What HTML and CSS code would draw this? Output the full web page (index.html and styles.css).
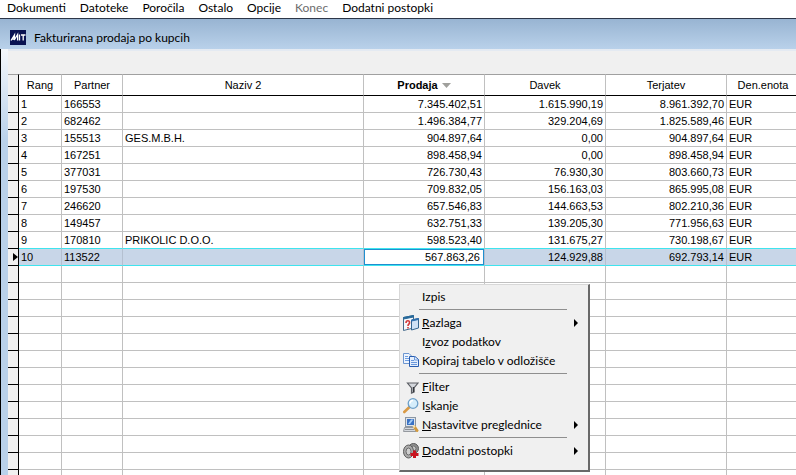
FILE: index.html
```html
<!DOCTYPE html>
<html lang="sl">
<head>
<meta charset="utf-8">
<title>Fakturirana prodaja po kupcih</title>
<link rel="stylesheet" href="styles.css">
</head>
<body>
<nav class="menubar">
  <button>Dokumenti</button>
  <button>Datoteke</button>
  <button>Poročila</button>
  <button>Ostalo</button>
  <button>Opcije</button>
  <button disabled>Konec</button>
  <button>Dodatni postopki</button>
</nav>
<header class="titlebar">
  <svg class="logo" viewBox="0 0 16 15" aria-hidden="true">
    <rect width="16" height="15" fill="#0a1352"/>
    <path d="M1 10.5L4.5 5L4.3 10L7.6 4.5V10.5M2 9H4M9.5 4.5V10.5M11 5H15.5M13.2 5V10.5" fill="none" stroke="#fff" stroke-width="1.3"/>
  </svg>
  <h1>Fakturirana prodaja po kupcih</h1>
</header>
<main class="window">
  <div class="toolbar"></div>
  <table class="grid">
    <colgroup><col class="c-mark"><col class="c-rank"><col class="c-partner"><col><col class="c-sum"><col class="c-sum"><col class="c-sum"><col class="c-unit"></colgroup>
    <thead>
      <tr><th></th><th>Rang</th><th>Partner</th><th>Naziv 2</th><th class="sorted">Prodaja <svg class="sort" viewBox="0 0 9 5" aria-hidden="true"><path d="M0 0H9L4.500 5Z" fill="#a0a09c"/></svg></th><th>Davek</th><th>Terjatev</th><th>Den.enota</th></tr>
    </thead>
    <tbody>
      <tr><td></td><td>1</td><td>166553</td><td></td><td class="num">7.345.402,51</td><td class="num">1.615.990,19</td><td class="num">8.961.392,70</td><td>EUR</td></tr>
      <tr><td></td><td>2</td><td>682462</td><td></td><td class="num">1.496.384,77</td><td class="num">329.204,69</td><td class="num">1.825.589,46</td><td>EUR</td></tr>
      <tr><td></td><td>3</td><td>155513</td><td>GES.M.B.H.</td><td class="num">904.897,64</td><td class="num">0,00</td><td class="num">904.897,64</td><td>EUR</td></tr>
      <tr><td></td><td>4</td><td>167251</td><td></td><td class="num">898.458,94</td><td class="num">0,00</td><td class="num">898.458,94</td><td>EUR</td></tr>
      <tr><td></td><td>5</td><td>377031</td><td></td><td class="num">726.730,43</td><td class="num">76.930,30</td><td class="num">803.660,73</td><td>EUR</td></tr>
      <tr><td></td><td>6</td><td>197530</td><td></td><td class="num">709.832,05</td><td class="num">156.163,03</td><td class="num">865.995,08</td><td>EUR</td></tr>
      <tr><td></td><td>7</td><td>246620</td><td></td><td class="num">657.546,83</td><td class="num">144.663,53</td><td class="num">802.210,36</td><td>EUR</td></tr>
      <tr><td></td><td>8</td><td>149457</td><td></td><td class="num">632.751,33</td><td class="num">139.205,30</td><td class="num">771.956,63</td><td>EUR</td></tr>
      <tr class="before-current"><td></td><td>9</td><td>170810</td><td>PRIKOLIC D.O.O.</td><td class="num">598.523,40</td><td class="num">131.675,27</td><td class="num">730.198,67</td><td>EUR</td></tr>
      <tr class="current"><td><svg class="marker" viewBox="0 0 5 8" aria-hidden="true"><path d="M0 0L5 4L0 8Z"/></svg></td><td>10</td><td>113522</td><td></td><td class="edit"><input type="text" value="567.863,26" aria-label="Prodaja"></td><td class="num">124.929,88</td><td class="num">692.793,14</td><td>EUR</td></tr>
      <tr><td></td><td></td><td></td><td></td><td></td><td></td><td></td><td></td></tr>
      <tr><td></td><td></td><td></td><td></td><td></td><td></td><td></td><td></td></tr>
      <tr><td></td><td></td><td></td><td></td><td></td><td></td><td></td><td></td></tr>
      <tr><td></td><td></td><td></td><td></td><td></td><td></td><td></td><td></td></tr>
      <tr><td></td><td></td><td></td><td></td><td></td><td></td><td></td><td></td></tr>
      <tr><td></td><td></td><td></td><td></td><td></td><td></td><td></td><td></td></tr>
      <tr><td></td><td></td><td></td><td></td><td></td><td></td><td></td><td></td></tr>
      <tr><td></td><td></td><td></td><td></td><td></td><td></td><td></td><td></td></tr>
      <tr><td></td><td></td><td></td><td></td><td></td><td></td><td></td><td></td></tr>
      <tr><td></td><td></td><td></td><td></td><td></td><td></td><td></td><td></td></tr>
      <tr><td></td><td></td><td></td><td></td><td></td><td></td><td></td><td></td></tr>
      <tr><td></td><td></td><td></td><td></td><td></td><td></td><td></td><td></td></tr>
      <tr><td></td><td></td><td></td><td></td><td></td><td></td><td></td><td></td></tr>
    </tbody>
  </table>
</main>
<div class="popup">
  <button><span class="icon"></span><span class="label">Izpis</span></button>
  <hr>
  <button>
    <svg class="icon" viewBox="0 0 16 16" aria-hidden="true">
      <path d="M.5 2.500L10.500 .500V13L.5 15.500Z" fill="#f6f8fb" stroke="#456b8c"/>
      <path d="M.5 2.500L10.500 .500V2L.5 4Z" fill="#27699a" stroke="#27699a"/>
      <path d="M3 8C3 5 7 5 6.500 8C6.300 9.300 5 9 5 11M5 12V13.500" fill="none" stroke="#d33b3b" stroke-width="1.600"/>
      <path d="M8.500 5L15.500 3.500V13L8.500 15Z" fill="#cfe1f5" stroke="#34658f"/>
      <path d="M8.500 5L15.500 3.500V4.500L8.500 6Z" fill="#2f6fae" stroke="#2f6fae"/>
    </svg>
    <span class="label"><u>R</u>azlaga</span><svg class="arrow" viewBox="0 0 4 8" aria-hidden="true"><path d="M0 0L4 4L0 8Z"/></svg>
  </button>
  <button><span class="icon"></span><span class="label">I<u>z</u>voz podatkov</span></button>
  <button>
    <svg class="icon" viewBox="0 0 16 16" aria-hidden="true">
      <path d="M.5 .500H6L8.500 3V10.500H.5Z" fill="#eef4fd" stroke="#6d96d0"/>
      <path d="M2 3.500H5M2 5.500H7M2 7.500H7" stroke="#6f9ee0"/>
      <path d="M6.500 3.500H12L15.500 6.500V13.500H6.500Z" fill="#e4eefc" stroke="#285db0"/>
      <path d="M11.500 3.500V7H15M8 7.500H11M8 9.500H14M8 11.500H14" fill="none" stroke="#6a98dc"/>
    </svg>
    <span class="label">Kopiraj tabelo v odložišče</span>
  </button>
  <hr>
  <button>
    <svg class="icon" viewBox="0 0 16 16" aria-hidden="true">
      <path d="M4.500 4H15L11 9V13L8.500 14V9Z" fill="#d4d7dc" stroke="#5c5f65" stroke-width="1.200"/>
      <path d="M10.500 8V13" stroke="#34373c" stroke-width="1.500"/>
    </svg>
    <span class="label"><u>F</u>ilter</span>
  </button>
  <button>
    <svg class="icon" viewBox="0 0 16 16" aria-hidden="true">
      <path d="M6.500 9L1.300 14" stroke="#d99a45" stroke-width="2.600" stroke-linecap="round"/>
      <circle cx="10" cy="5.500" r="4.800" fill="#d5edfb" stroke="#6c9fc9" stroke-width="1.300"/>
      <path d="M7 5.500C7 3.500 8.500 2.500 10 2.500" fill="none" stroke="#fff" stroke-width="1.500"/>
    </svg>
    <span class="label">I<u>s</u>kanje</span>
  </button>
  <button>
    <svg class="icon" viewBox="0 0 16 16" aria-hidden="true">
      <rect x="2.500" y=".5" width="10" height="9" fill="#dfe4ea" stroke="#8b96a3"/>
      <rect x="4" y="2" width="7" height="6" fill="#3a72c4"/>
      <path d="M5 7L8 2.500H10.500L7 7Z" fill="#a5ccf5"/>
      <path d="M1.500 10.500H11.500L13 14.500H.5Z" fill="#d4d8dd" stroke="#95999f"/>
      <path d="M2 12.500H11" stroke="#8c9096"/>
      <path d="M11.500 10L14 13.500" stroke="#d39a3d" stroke-width="3" stroke-linecap="round"/>
      <circle cx="11" cy="9.500" r="1.300" fill="#f4dfaa"/>
    </svg>
    <span class="label"><u>N</u>astavitve preglednice</span><svg class="arrow" viewBox="0 0 4 8" aria-hidden="true"><path d="M0 0L4 4L0 8Z"/></svg>
  </button>
  <hr>
  <button>
    <svg class="icon" viewBox="0 0 16 16" aria-hidden="true">
      <circle cx="10.500" cy="5.500" r="5" fill="#8e8e8e" stroke="#5b5b5b"/>
      <circle cx="10.500" cy="5.500" r="2.500" fill="#c4c4c4" stroke="#707070"/>
      <ellipse cx="5.500" cy="8.500" rx="5" ry="6.500" fill="#a9a9a9" stroke="#5c5c5c"/>
      <ellipse cx="5.500" cy="8.500" rx="2.500" ry="3.500" fill="#cfcfcf" stroke="#6c6c6c"/>
      <path d="M11.500 7.500V15M7.500 11.500H15.500" stroke="#c8141f" stroke-width="3"/>
    </svg>
    <span class="label"><u>D</u>odatni postopki</span><svg class="arrow" viewBox="0 0 4 8" aria-hidden="true"><path d="M0 0L4 4L0 8Z"/></svg>
  </button>
</div>
</body>
</html>
```
FILE: styles.css
```css
* {
  box-sizing: border-box;
}

body {
  margin: 0;
  height: 100vh;
  overflow: hidden;
  display: flex;
  flex-direction: column;
  background: #fff;
  color: #000;
  font: 12px/16px Lato, "Open Sans", sans-serif;
}

button {
  border: 0;
  background: none;
  color: inherit;
  font: inherit;
}

.menubar {
  display: flex;
  flex: none;
  height: 19px;
  border-bottom: 1px solid #2c3648;
}

.menubar button {
  padding: 0 7px 2px;
  white-space: nowrap;
}

.menubar button:disabled {
  color: #6d6d6d;
}

.titlebar {
  display: flex;
  flex: none;
  align-items: center;
  gap: 8px;
  height: 30px;
  padding: 6px 10px 0;
  background: linear-gradient(#98b4d2, #b9d1ea);
}

.titlebar h1 {
  margin: 0;
  font: inherit;
  padding-top: 2px;
}

.logo {
  width: 16px;
  height: 15px;
}

.window {
  flex: 1;
  min-height: 0;
  overflow: hidden;
  border-left: 1px solid #000;
  padding-left: 7px;
  background: linear-gradient(#f4f7fb, #b9d1ea 92px);
}

.toolbar {
  height: 25px;
  border-top: 2px solid #e4eaf2;
  background: #f0f0f0;
}

.grid {
  width: calc(100% + 4px);
  table-layout: fixed;
  border-spacing: 0;
  background: #fff;
  font: 11px/16px "Liberation Sans", Arial, sans-serif;
}

.c-mark {
  width: 11px;
}

.c-rank {
  width: 43px;
}

.c-partner {
  width: 61px;
}

.c-sum {
  width: 121px;
}

.c-unit {
  width: 73px;
}

th {
  height: 22px;
  padding: 0;
  border: solid #c0c0c0;
  border-width: 1px 1px 1px 0;
  border-top-color: #a0a0a0;
  border-bottom-color: #000;
  font-weight: normal;
  white-space: nowrap;
}

th.sorted {
  font-weight: bold;
}

.sort {
  width: 9px;
  height: 5px;
  margin-left: 1px;
  vertical-align: 1px;
}

td {
  height: 17px;
  padding: 0 2px;
  border: solid #c0c0c0;
  border-width: 0 1px 1px 0;
  white-space: nowrap;
}

.num {
  text-align: right;
}

th:first-child,
td:first-child {
  padding: 0;
  border-color: #000;
  background: #f0f0f0;
}

th:first-child {
  border-top-color: #a0a0a0;
}

.before-current td:not(:first-child) {
  border-bottom-color: #3fe4ee;
}

.current td:not(:first-child) {
  border-right-color: #b4c0d0;
  border-bottom: 1px solid #3fe4ee;
  background: #c8d6e8;
}

.marker {
  display: block;
  width: 5px;
  height: 8px;
  margin-left: 5px;
}

td.edit {
  padding: 0;
}

.edit input {
  display: block;
  width: 100%;
  height: 16px;
  padding: 0 3px;
  border: 1px solid #1f8fd0;
  border-radius: 0;
  background: #fff;
  color: #000;
  font: inherit;
  text-align: right;
}

.popup {
  position: absolute;
  left: 399px;
  top: 284px;
  width: 191px;
  padding: 2px 1px 10px 3px;
  border: solid #d8d8d8;
  border-width: 1px 2px 2px 1px;
  border-right-color: #696969;
  border-bottom-color: #696969;
  background: #f0f0f0;
}

.popup button {
  display: flex;
  align-items: center;
  width: 100%;
  height: 19px;
  padding: 0 9px 0 0;
  text-align: left;
}

.popup hr {
  height: 1px;
  margin: 3px 20px 3px 16px;
  border: 0;
  background: #8f8f8f;
}

.icon {
  flex: none;
  width: 16px;
  height: 16px;
}

.label {
  flex: 1;
  margin-left: 3px;
  white-space: nowrap;
}

.arrow {
  flex: none;
  width: 4px;
  height: 8px;
}
```
